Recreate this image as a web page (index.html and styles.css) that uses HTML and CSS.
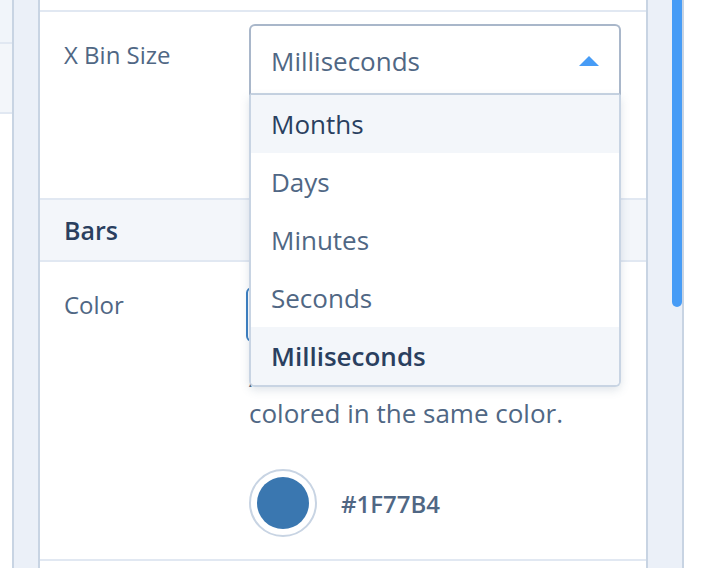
FILE: index.html
```html
<!DOCTYPE html>
<html lang="en">
<head>
<meta charset="utf-8">
<title>Bar trace editor</title>
<link rel="stylesheet" href="styles.css">
</head>
<body>
<div class="app">
  <aside class="side-left">
    <div class="sl-item sl-a"></div>
    <div class="sl-item sl-b"></div>
  </aside>
  <div class="rail"></div>
  <main class="panel">
    <div class="panel-top"></div>
    <section class="field field-xbin">
      <div class="field-label">X Bin Size</div>
      <div class="field-control">
        <div class="dropdown">
          <div class="dd-head">
            <span class="dd-value">Milliseconds</span>
            <svg class="dd-arrow" width="20" height="10" viewBox="0 0 20 10"><path d="M0 10 L10 0 L20 10 Z" fill="#479cf6"/></svg>
          </div>
          <ul class="dd-menu">
            <li class="dd-opt is-hover">Months</li>
            <li class="dd-opt">Days</li>
            <li class="dd-opt">Minutes</li>
            <li class="dd-opt">Seconds</li>
            <li class="dd-opt is-selected">Milliseconds</li>
          </ul>
        </div>
      </div>
    </section>
    <div class="fold-head">Bars</div>
    <section class="field field-color">
      <div class="field-label">Color</div>
      <div class="field-control">
        <div class="btn-group">
          <span class="btn is-active">Single</span>
          <span class="btn">Multiple</span>
        </div>
        <p class="desc">All bars of the trace are<br>colored in the same color.</p>
        <div class="swatch-row">
          <span class="swatch"><span class="swatch-dot"></span></span>
          <span class="hex">#1F77B4</span>
        </div>
      </div>
    </section>
    <div class="panel-rest"></div>
  </main>
  <div class="scroll-rail"><div class="thumb"></div></div>
  <div class="side-right"></div>
</div>
</body>
</html>
```
FILE: styles.css
```css
* { box-sizing: border-box; }
html, body { margin: 0; padding: 0; background: #fff; }
body {
  font-family: "Open Sans", "Noto Sans", sans-serif;
  color: #506784;
  width: 706px;
  height: 568px;
  overflow: hidden;
}
.app {
  display: flex;
  height: 568px;
}
.side-left {
  width: 12px;
  flex: none;
  display: flex;
  flex-direction: column;
}
.sl-item { border-bottom: 2px solid #e1e8f2; }
.sl-a { height: 44px; background: #f1f5fa; }
.sl-b { height: 70px; background: #f3f6fa; }
.rail {
  width: 28px;
  flex: none;
  background: #ebf0f8;
  border-left: 2px solid #c8d4e3;
  border-right: 2px solid #c8d4e3;
}
.panel {
  width: 606px;
  flex: none;
  display: flex;
  flex-direction: column;
  background: #fff;
}
.panel-top { height: 10px; flex: none; }
.field {
  display: grid;
  grid-template-columns: 185px 372px;
  padding-left: 24px;
  border-top: 2px solid #e1e8f2;
  flex: none;
}
.field-xbin {
  height: 188px;
  padding-top: 12px;
}
.field-label {
  font-size: 24px;
  line-height: 30px;
  color: #506784;
}
.field-xbin .field-label { padding-top: 16px; }
.dropdown { position: relative; }
.dd-head {
  height: 71px;
  border: 2px solid #a9b7ca;
  border-bottom-color: #c8d4e3;
  border-radius: 6px 6px 0 0;
  display: flex;
  align-items: center;
  justify-content: space-between;
  padding: 2px 20px 0 20px;
  font-size: 26px;
  color: #506784;
}
.dd-arrow { display: block; }
.dd-menu {
  position: absolute;
  left: 0;
  right: 0;
  top: 71px;
  margin: 0;
  padding: 0;
  list-style: none;
  background: #fff;
  border: 2px solid #c8d4e3;
  border-top: none;
  border-radius: 0 0 6px 6px;
  box-shadow: 0 3px 10px rgba(80, 103, 132, 0.18);
  overflow: hidden;
  z-index: 5;
}
.dd-opt {
  height: 58px;
  display: flex;
  align-items: center;
  padding-left: 20px;
  font-size: 26px;
  color: #506784;
}
.dd-opt.is-hover { background: #f3f6fa; color: #2a3f5f; }
.dd-opt.is-selected { background: #f3f6fa; color: #2a3f5f; font-weight: 600; }
.fold-head {
  height: 64px;
  flex: none;
  background: #f3f6fa;
  border-top: 2px solid #e1e8f2;
  border-bottom: 2px solid #e1e8f2;
  padding-left: 24px;
  display: flex;
  align-items: center;
  font-size: 25px;
  font-weight: 600;
  color: #2a3f5f;
}
.field-color {
  border-top: none;
  height: 297px;
  padding-top: 28px;
}
.field-color .field-label { padding-top: 0; }
.btn-group {
  display: flex;
  margin-left: -3px;
  margin-top: -3px;
}
.btn {
  height: 55px;
  width: 180px;
  border: 2px solid #c8d4e3;
  display: flex;
  align-items: center;
  justify-content: center;
  font-size: 24px;
}
.btn.is-active {
  border-color: #3a7ec0;
  border-radius: 6px 0 0 6px;
  color: #2a3f5f;
}
.desc {
  margin: 17px 0 0 0;
  font-size: 26px;
  line-height: 36px;
  color: #506784;
}
.swatch-row {
  display: flex;
  align-items: center;
  gap: 24px;
  margin-top: 38px;
}
.swatch {
  width: 68px;
  height: 68px;
  border-radius: 50%;
  border: 2px solid #c8d4e3;
  padding: 6px;
  background: #fff;
  display: flex;
}
.swatch-dot {
  flex: 1;
  border-radius: 50%;
  background: #3a77b0;
}
.hex {
  font-size: 24px;
  font-weight: 600;
  color: #506784;
}
.panel-rest {
  flex: 1;
  border-top: 2px solid #e1e8f2;
}
.scroll-rail {
  width: 38px;
  flex: none;
  background: #ebf0f8;
  border-left: 2px solid #c8d4e3;
  border-right: 2px solid #c8d4e3;
  display: flex;
  justify-content: flex-end;
  align-items: flex-start;
}
.thumb {
  width: 10px;
  height: 307px;
  background: #479cf6;
  border-radius: 0 0 5px 5px;
}
.side-right { width: 22px; flex: none; background: #fff; }
```
